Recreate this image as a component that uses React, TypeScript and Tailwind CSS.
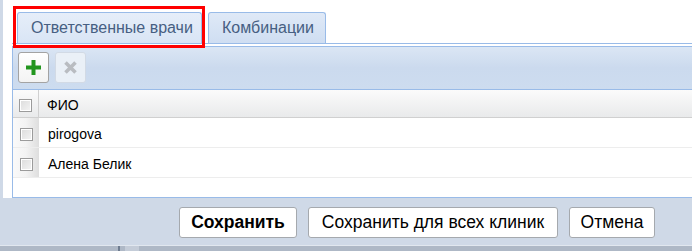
const font = { fontFamily: '"Liberation Sans", Arial, sans-serif' };

const Checkbox = () => (
  <span className="block w-[13px] h-[13px] border border-[#9b9b9b] bg-gradient-to-br from-[#dcdcdc] to-[#f4f4f4] shadow-[inset_0_0_0_1px_#ffffff]" />
);

const PlusIcon = () => (
  <svg width="15" height="15" viewBox="0 0 15 15">
    <path d="M5.5 0h4v5.5H15v4H9.5V15h-4V9.5H0v-4h5.5z" fill="#23961f" />
  </svg>
);

const CrossIcon = () => (
  <svg width="13" height="13" viewBox="0 0 13 13">
    <path d="M1.5 1.5l10 10M11.5 1.5l-10 10" stroke="#b9bcc1" strokeWidth="3.6" />
  </svg>
);

const rows = ["pirogova", "Алена Белик"];

export default function App() {
  return (
    <div
      className="relative w-[692px] h-[251px] overflow-hidden bg-white flex flex-col text-black"
      style={font}
    >
      {/* Основная область */}
      <div className="flex h-[198px]">
        <div className="w-[3px] bg-[#cfd9e7]" />
        <div className="flex-1 pl-[9px] pt-[12px] flex flex-col bg-white">
          {/* Вкладки */}
          <div className="flex items-end gap-[6px] pl-[5px] h-[32px] border-b border-[#99bbe8]">
            <div className="h-[31px] w-[185px] flex items-center pl-[13px] rounded-t-[3px] border border-b-0 border-[#99bbe8] bg-gradient-to-b from-[#e6eef9] to-[#d9e5f5] text-[16px] text-[#475f82]">
              Ответственные врачи
            </div>
            <div className="h-[31px] w-[118px] flex items-center pl-[13px] rounded-t-[3px] border border-b-0 border-[#99bbe8] bg-gradient-to-b from-[#dfe9f7] to-[#cfdef2] text-[16px] text-[#475f82]">
              Комбинации
            </div>
          </div>

          {/* Панель */}
          <div className="mt-[2px] flex-1 flex flex-col border-l border-b border-[#99bbe8]">
            {/* Панель инструментов */}
            <div className="h-[44px] border-t border-b border-[#99bbe8] bg-gradient-to-b from-[#dbe6f4] via-[#cbdaee] to-[#cddcef] flex items-start gap-[6px] pl-[5px] pt-[5px]">
              <button className="w-[31px] h-[31px] rounded-[3px] border border-[#a3a3a3] bg-gradient-to-b from-white to-[#f3f3f3] flex items-center justify-center">
                <PlusIcon />
              </button>
              <button className="w-[31px] h-[31px] rounded-[3px] border border-[#d2dae5] bg-[#eaf0f7] flex items-center justify-center">
                <CrossIcon />
              </button>
            </div>

            {/* Таблица */}
            <div className="flex-1 flex flex-col text-[14px]">
              <div className="h-[28px] flex border-b border-[#d0d0d0] bg-gradient-to-b from-[#fbfbfb] to-[#e9eaeb]">
                <div className="w-[26px] flex items-center justify-center pt-[3px] border-r border-[#d0d0d0]">
                  <Checkbox />
                </div>
                <div className="flex items-center pl-[8px] pt-[3px]">ФИО</div>
              </div>
              {rows.map((r) => (
                <div key={r} className="h-[30px] flex border-b border-[#ededed]">
                  <div className="w-[26px] flex items-center justify-center pt-[3px] bg-gradient-to-r from-[#fafafa] via-[#f3f3f3] to-[#dedede]">
                    <Checkbox />
                  </div>
                  <div className="flex items-center pl-[9px] pt-[3px]">{r}</div>
                </div>
              ))}
            </div>
          </div>
        </div>
      </div>

      {/* Кнопки */}
      <div className="h-[47px] bg-[#cfd9e7] flex items-start justify-end gap-[11px] pt-[9px] pr-[37px] text-[17.5px]">
        <button className="h-[31px] w-[118px] rounded-[3px] border border-[#a5a9ae] bg-white font-bold">
          Сохранить
        </button>
        <button className="h-[31px] w-[250px] rounded-[3px] border border-[#a5a9ae] bg-white">
          Сохранить для всех клиник
        </button>
        <button className="h-[31px] w-[86px] rounded-[3px] border border-[#a5a9ae] bg-white">
          Отмена
        </button>
      </div>
      <div className="flex-1 border-t border-[#e1e7ef] bg-[#aeb8c6] flex">
        <div className="ml-[118px] w-[2px] bg-[#6e7c90]" />
        <div className="ml-[5px] w-[14px] bg-[#c4ccd8]" />
      </div>

      {/* Выделение */}
      <div className="absolute left-[13px] top-[6px] w-[192px] h-[42px] border-[3px] border-[#ff0000] pointer-events-none" />
    </div>
  );
}
